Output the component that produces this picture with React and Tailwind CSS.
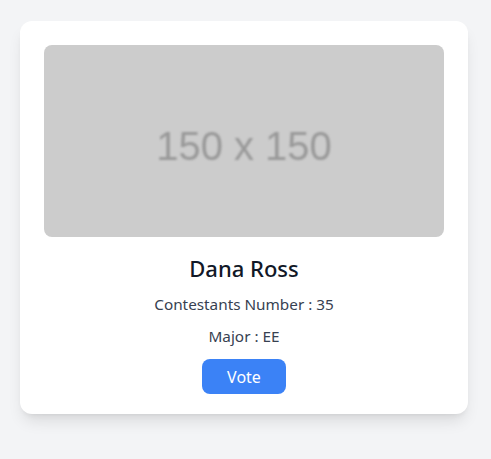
export default function App() {
  return (
    <div className="min-h-screen bg-[#f3f4f6] px-5 pt-[21px]" style={{ fontFamily: '"Noto Sans", "Open Sans", sans-serif' }}>
      <div className="w-[448px] rounded-xl bg-white px-6 pt-6 pb-5 shadow-lg">
        <div className="flex h-[192px] w-full items-center justify-center rounded-lg bg-[#cccccc] pt-[10px]">
          <span className="text-[40px] text-[#999999] blur-[0.9px]" style={{ fontFamily: '"Liberation Sans", Arial, sans-serif' }}>150 x 150</span>
        </div>
        <div className="flex flex-col items-center">
          <h2 className="mt-[17px] text-[22px] font-medium leading-7 text-[#111827]">Dana Ross</h2>
          <p className="mt-[10px] text-[15.3px] leading-6 text-[#374151]">Contestants Number : 35</p>
          <p className="mt-2 text-[15.3px] leading-6 text-[#374151]">Major : EE</p>
          <button className="mt-[11px] h-[35px] w-[84px] rounded-lg bg-[#3b82f6] text-base text-white">Vote</button>
        </div>
      </div>
    </div>
  );
}
